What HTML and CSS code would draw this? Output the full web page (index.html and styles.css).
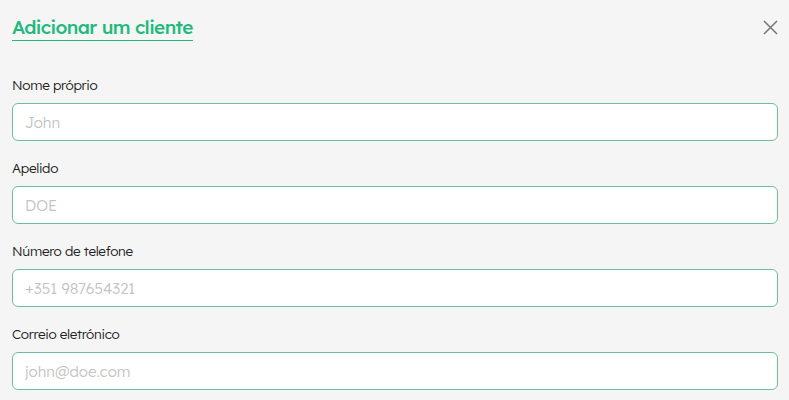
FILE: index.html
```html
<!DOCTYPE html>
<html lang="pt">
<head>
<meta charset="utf-8">
<link rel="stylesheet" href="styles.css">
</head>
<body>
<div class="modal">
  <div class="header">
    <h1 class="title">Adicionar um cliente</h1>
    <button class="close" aria-label="Fechar">
      <svg width="15" height="15" viewBox="0 0 15 15"><path d="M1 1L14 14M14 1L1 14" stroke="#767676" stroke-width="1.5" fill="none"/></svg>
    </button>
  </div>
  <form class="form">
    <div class="field">
      <label class="label">Nome próprio</label>
      <input class="input" placeholder="John">
    </div>
    <div class="field">
      <label class="label">Apelido</label>
      <input class="input" placeholder="DOE">
    </div>
    <div class="field">
      <label class="label">Número de telefone</label>
      <input class="input" placeholder="+351 987654321">
    </div>
    <div class="field">
      <label class="label">Correio eletrónico</label>
      <input class="input" placeholder="john@doe.com">
    </div>
  </form>
</div>
</body>
</html>
```
FILE: styles.css
```css
html, body {
  margin: 0;
  padding: 0;
  background: #f4f5f4;
  font-family: "Lexend", "Lato", "Noto Sans", sans-serif;
}
.modal {
  padding: 15px 11px 0 12px;
}
.header {
  display: flex;
  justify-content: space-between;
  align-items: flex-start;
}
.title {
  margin: 0;
  font-size: 19px;
  font-weight: 500;
  letter-spacing: -0.6px;
  color: #22b97c;
  line-height: 24px;
  padding-bottom: 1px;
  border-bottom: 1px solid #22b97c;
}
.close {
  background: none;
  border: none;
  padding: 0;
  margin: 5px 0 0 0;
  width: 15px;
  height: 15px;
  display: flex;
}
.form {
  display: flex;
  flex-direction: column;
  gap: 18px;
  margin-top: 35px;
}
.field {
  display: flex;
  flex-direction: column;
  gap: 9px;
}
.label {
  font-size: 13.5px;
  font-weight: 300;
  letter-spacing: -0.3px;
  color: #222;
  line-height: 18px;
}
.input {
  box-sizing: border-box;
  height: 38px;
  width: 100%;
  border: 1px solid #6cbf9b;
  border-radius: 6px;
  background: #fff;
  padding: 0 12px;
  font-family: inherit;
  font-size: 15px;
  font-weight: 300;
  color: #222;
  outline: none;
}
.input::placeholder {
  color: #c3c3c3;
}
```
